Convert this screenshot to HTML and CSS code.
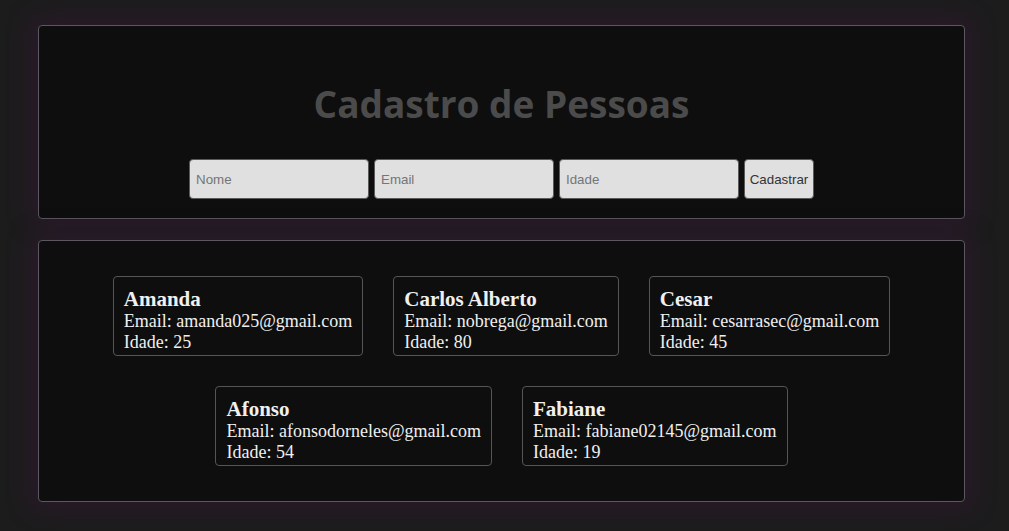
FILE: index.html
```html
<!DOCTYPE html>
<html lang="pt-BR">
<head>
<meta charset="utf-8">
<title>Cadastro de Pessoas</title>
<link rel="stylesheet" href="styles.css">
</head>
<body>
  <section class="panel form-panel">
    <h1 class="title">Cadastro de Pessoas</h1>
    <form class="form">
      <input class="field" type="text" placeholder="Nome">
      <input class="field" type="email" placeholder="Email">
      <input class="field" type="number" placeholder="Idade">
      <button class="btn" type="button">Cadastrar</button>
    </form>
  </section>
  <section class="panel list-panel">
    <div class="cards">
      <div class="card"><h3 class="name">Amanda</h3><p class="line">Email: amanda025@gmail.com</p><p class="line">Idade: 25</p></div>
      <div class="card"><h3 class="name">Carlos Alberto</h3><p class="line">Email: nobrega@gmail.com</p><p class="line">Idade: 80</p></div>
      <div class="card"><h3 class="name">Cesar</h3><p class="line">Email: cesarrasec@gmail.com</p><p class="line">Idade: 45</p></div>
      <div class="card"><h3 class="name">Afonso</h3><p class="line">Email: afonsodorneles@gmail.com</p><p class="line">Idade: 54</p></div>
      <div class="card"><h3 class="name">Fabiane</h3><p class="line">Email: fabiane02145@gmail.com</p><p class="line">Idade: 19</p></div>
    </div>
  </section>
</body>
</html>
```
FILE: styles.css
```css
html, body {
  margin: 0;
  height: 100%;
}
body {
  background: #1d1c1d;
  padding: 25px 44px 0 38px;
  box-sizing: border-box;
  font-family: "Liberation Serif", serif;
  display: flex;
  flex-direction: column;
  gap: 21px;
}
.panel {
  background: #0e0e0e;
  border: 1px solid #5c5660;
  border-radius: 4px;
  box-shadow: 0 0 22px 6px #2a1a2b;
}
.form-panel {
  padding: 53px 20px 19px;
  display: flex;
  flex-direction: column;
  align-items: center;
}
.title {
  margin: 0 0 30px;
  font-family: "Open Sans", sans-serif;
  font-weight: 700;
  font-size: 37px;
  line-height: 50px;
  color: #4b4b4b;
}
.form {
  display: flex;
  gap: 5px;
}
.field {
  width: 180px;
  height: 40px;
  box-sizing: border-box;
  background: #e0e0e0;
  border: 1px solid #5a5a5a;
  border-radius: 4px;
  padding: 0 6px;
  font-family: "Liberation Sans", sans-serif;
  font-size: 13.33px;
  outline: none;
}
.field::placeholder {
  color: #757575;
}
.btn {
  width: 70px;
  height: 40px;
  background: #e0e0e0;
  border: 1px solid #5a5a5a;
  border-radius: 4px;
  padding: 0;
  font-family: "Liberation Sans", sans-serif;
  font-size: 13.33px;
  color: #333;
}
.list-panel {
  padding: 20px;
}
.cards {
  display: flex;
  flex-wrap: wrap;
  justify-content: center;
}
.card {
  margin: 15px;
  padding: 10px 10px 2px;
  border: 1px solid #555;
  border-radius: 4px;
  color: #f0f0f0;
}
.name {
  margin: 0;
  font-size: 21px;
  line-height: 24px;
  font-weight: 700;
}
.line {
  margin: 0;
  font-size: 18px;
  line-height: 21px;
}
```
